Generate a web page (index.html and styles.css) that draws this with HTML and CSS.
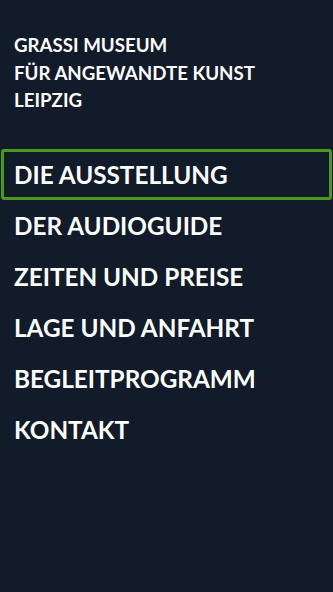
FILE: index.html
```html
<!DOCTYPE html>
<html lang="de">
<head>
<meta charset="utf-8">
<title>GRASSI Museum</title>
<link rel="stylesheet" href="styles.css">
</head>
<body>
<div class="page">
  <header class="brand">
    <div class="brand-line">GRASSI MUSEUM</div>
    <div class="brand-line">FÜR ANGEWANDTE KUNST</div>
    <div class="brand-line">LEIPZIG</div>
  </header>
  <nav class="menu">
    <a class="menu-item active" href="#">DIE AUSSTELLUNG</a>
    <a class="menu-item" href="#">DER AUDIOGUIDE</a>
    <a class="menu-item" href="#">ZEITEN UND PREISE</a>
    <a class="menu-item" href="#">LAGE UND ANFAHRT</a>
    <a class="menu-item" href="#">BEGLEITPROGRAMM</a>
    <a class="menu-item" href="#">KONTAKT</a>
  </nav>
</div>
</body>
</html>
```
FILE: styles.css
```css
html, body {
  margin: 0;
  padding: 0;
  background: #111b29;
  height: 100%;
}
.page {
  font-family: Lato, "Open Sans", sans-serif;
  font-weight: 700;
  color: #ffffff;
  min-height: 100%;
}
.brand {
  padding: 32px 14px 0 14px;
  font-size: 18.7px;
  line-height: 27.5px;
}
.menu {
  display: flex;
  flex-direction: column;
  margin-top: 34px;
  padding: 0 1px;
}
.menu-item {
  display: block;
  color: #ffffff;
  text-decoration: none;
  font-size: 24.3px;
  line-height: 45px;
  border: 3px solid transparent;
  border-radius: 3px;
  padding: 0 10px;
}
.menu-item.active {
  border-color: #4a9a1b;
}
```
